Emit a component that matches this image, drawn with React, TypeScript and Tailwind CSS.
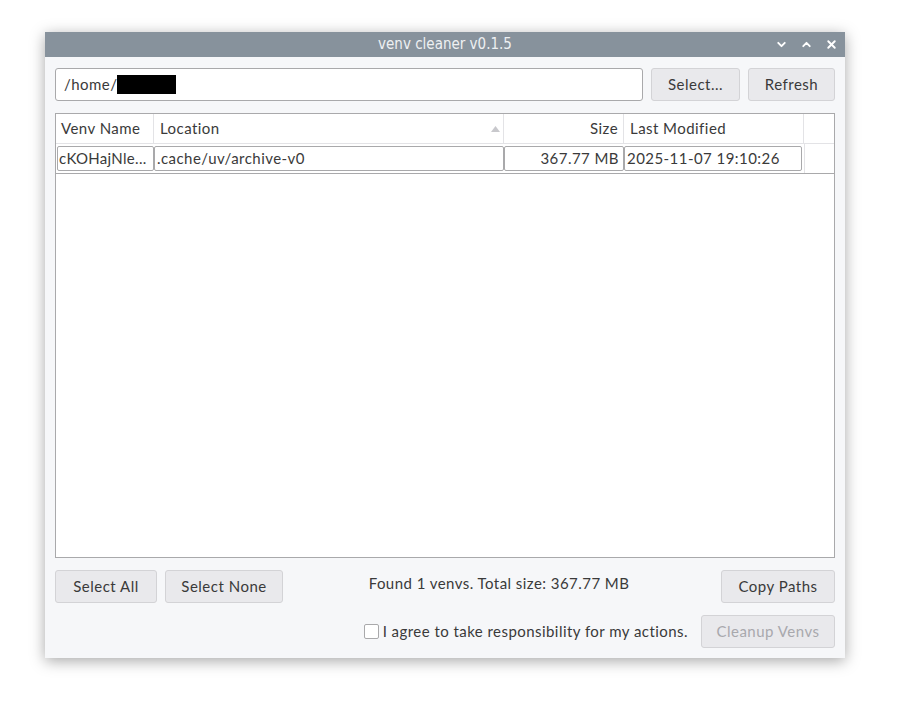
import { ChevronDown, ChevronUp, X } from "lucide-react";

const FONT = { fontFamily: "Lato, 'Open Sans', sans-serif" };

function Btn({ label, w, disabled }: { label: string; w: string; disabled?: boolean }) {
  return (
    <button
      className={`${w} h-[33px] rounded-[3px] border border-[#d3d3d6] bg-[#e9e9ec] text-[15px] tracking-[0.5px] ${
        disabled ? "text-[#a8a8ac]" : "text-[#3a3a3a]"
      }`}
    >
      {label}
    </button>
  );
}

export default function App() {
  return (
    <div className="w-[897px] h-[704px] bg-white pt-[32px] pl-[45px]" style={FONT}>
      <div className="w-[800px] h-[626px] flex flex-col bg-[#f6f7f9] shadow-[0_3px_14px_rgba(0,0,0,0.35)]">
        {/* title bar */}
        <div className="h-[25px] flex items-center bg-[#87929c] relative">
          <div
            className="flex-1 text-center text-[15px] text-[#eef0f2]"
            style={{ fontFamily: "'DejaVu Sans', sans-serif", fontStretch: "condensed" }}
          >
            venv cleaner v0.1.5
          </div>
          <div className="absolute right-[7px] top-0 h-full flex items-center gap-[12px] text-white">
            <ChevronDown size={13} strokeWidth={3.5} />
            <ChevronUp size={13} strokeWidth={3.5} />
            <X size={13} strokeWidth={3.5} />
          </div>
        </div>

        <div className="flex-1 flex flex-col px-[10px] pt-[11px] pb-[10px] tracking-[0.45px]">
          {/* path row */}
          <div className="flex gap-[8px]">
            <div className="w-[588px] h-[33px] flex items-center rounded-[3px] border border-[#a9a9ab] bg-white pl-[8px] text-[15px] text-[#3a3a3a]">
              /home/
              <span className="inline-block w-[59px] h-[19px] bg-black" />
            </div>
            <Btn label="Select..." w="w-[89px]" />
            <Btn label="Refresh" w="w-[87px]" />
          </div>

          {/* table */}
          <div className="mt-[12px] h-[445px] border border-[#a9a9ab] bg-white text-[15px] text-[#3a3a3a]">
            <div className="flex h-[30px] border-b border-[#e3e3e6]">
              <div className="w-[98px] flex items-center pl-[5px] border-r border-[#e3e3e6] whitespace-nowrap">Venv Name</div>
              <div className="w-[350px] flex items-center justify-between pl-[6px] pr-[3px] border-r border-[#e3e3e6]">
                <span>Location</span>
                <svg width="9" height="6" viewBox="0 0 9 6">
                  <path d="M4.5 0 L9 6 L0 6 Z" fill="#c8c8cc" />
                </svg>
              </div>
              <div className="w-[120px] flex items-center justify-end pr-[5px] border-r border-[#e3e3e6]">Size</div>
              <div className="w-[180px] flex items-center pl-[6px] border-r border-[#e3e3e6]">Last Modified</div>
              <div className="flex-1" />
            </div>
            <div className="flex h-[30px] border-b border-[#a9a9ab]">
              <div className="w-[98px] flex items-center py-[2px] pl-[1px]">
                <div className="w-full h-full flex items-center border border-[#a9a9ab] rounded-[2px] pl-[1px] overflow-hidden whitespace-nowrap tracking-[0.3px]">
                  cKOHajNle...
                </div>
              </div>
              <div className="w-[350px] flex items-center py-[2px]">
                <div className="w-full h-full flex items-center border border-[#a9a9ab] rounded-[2px] pl-[2px]">
                  .cache/uv/archive-v0
                </div>
              </div>
              <div className="w-[120px] flex items-center py-[2px]">
                <div className="w-full h-full flex items-center justify-end border border-[#a9a9ab] rounded-[2px] pr-[4px]">
                  367.77 MB
                </div>
              </div>
              <div className="w-[180px] flex items-center py-[2px] pr-[2px]">
                <div className="w-full h-full flex items-center border border-[#a9a9ab] rounded-[2px] pl-[2px] whitespace-nowrap">
                  2025-11-07 19:10:26
                </div>
              </div>
              <div className="flex-1 border-l border-[#e3e3e6]" />
            </div>
          </div>

          {/* bottom row 1 */}
          <div className="mt-[12px] flex items-start">
            <div className="flex gap-[8px]">
              <Btn label="Select All" w="w-[102px]" />
              <Btn label="Select None" w="w-[118px]" />
            </div>
            <div className="flex-1 text-center text-[15px] text-[#3a3a3a] pt-[2px] pr-[6px]">
              Found 1 venvs. Total size: 367.77 MB
            </div>
            <Btn label="Copy Paths" w="w-[114px]" />
          </div>

          {/* bottom row 2 */}
          <div className="mt-[12px] flex items-center justify-end">
            <span className="w-[15px] h-[15px] rounded-[2px] border border-[#a9a9ab] bg-white mr-[4px]" />
            <span className="text-[15px] text-[#3a3a3a] mr-[13px]">I agree to take responsibility for my actions.</span>
            <Btn label="Cleanup Venvs" w="w-[134px]" disabled />
          </div>
        </div>
      </div>
    </div>
  );
}
